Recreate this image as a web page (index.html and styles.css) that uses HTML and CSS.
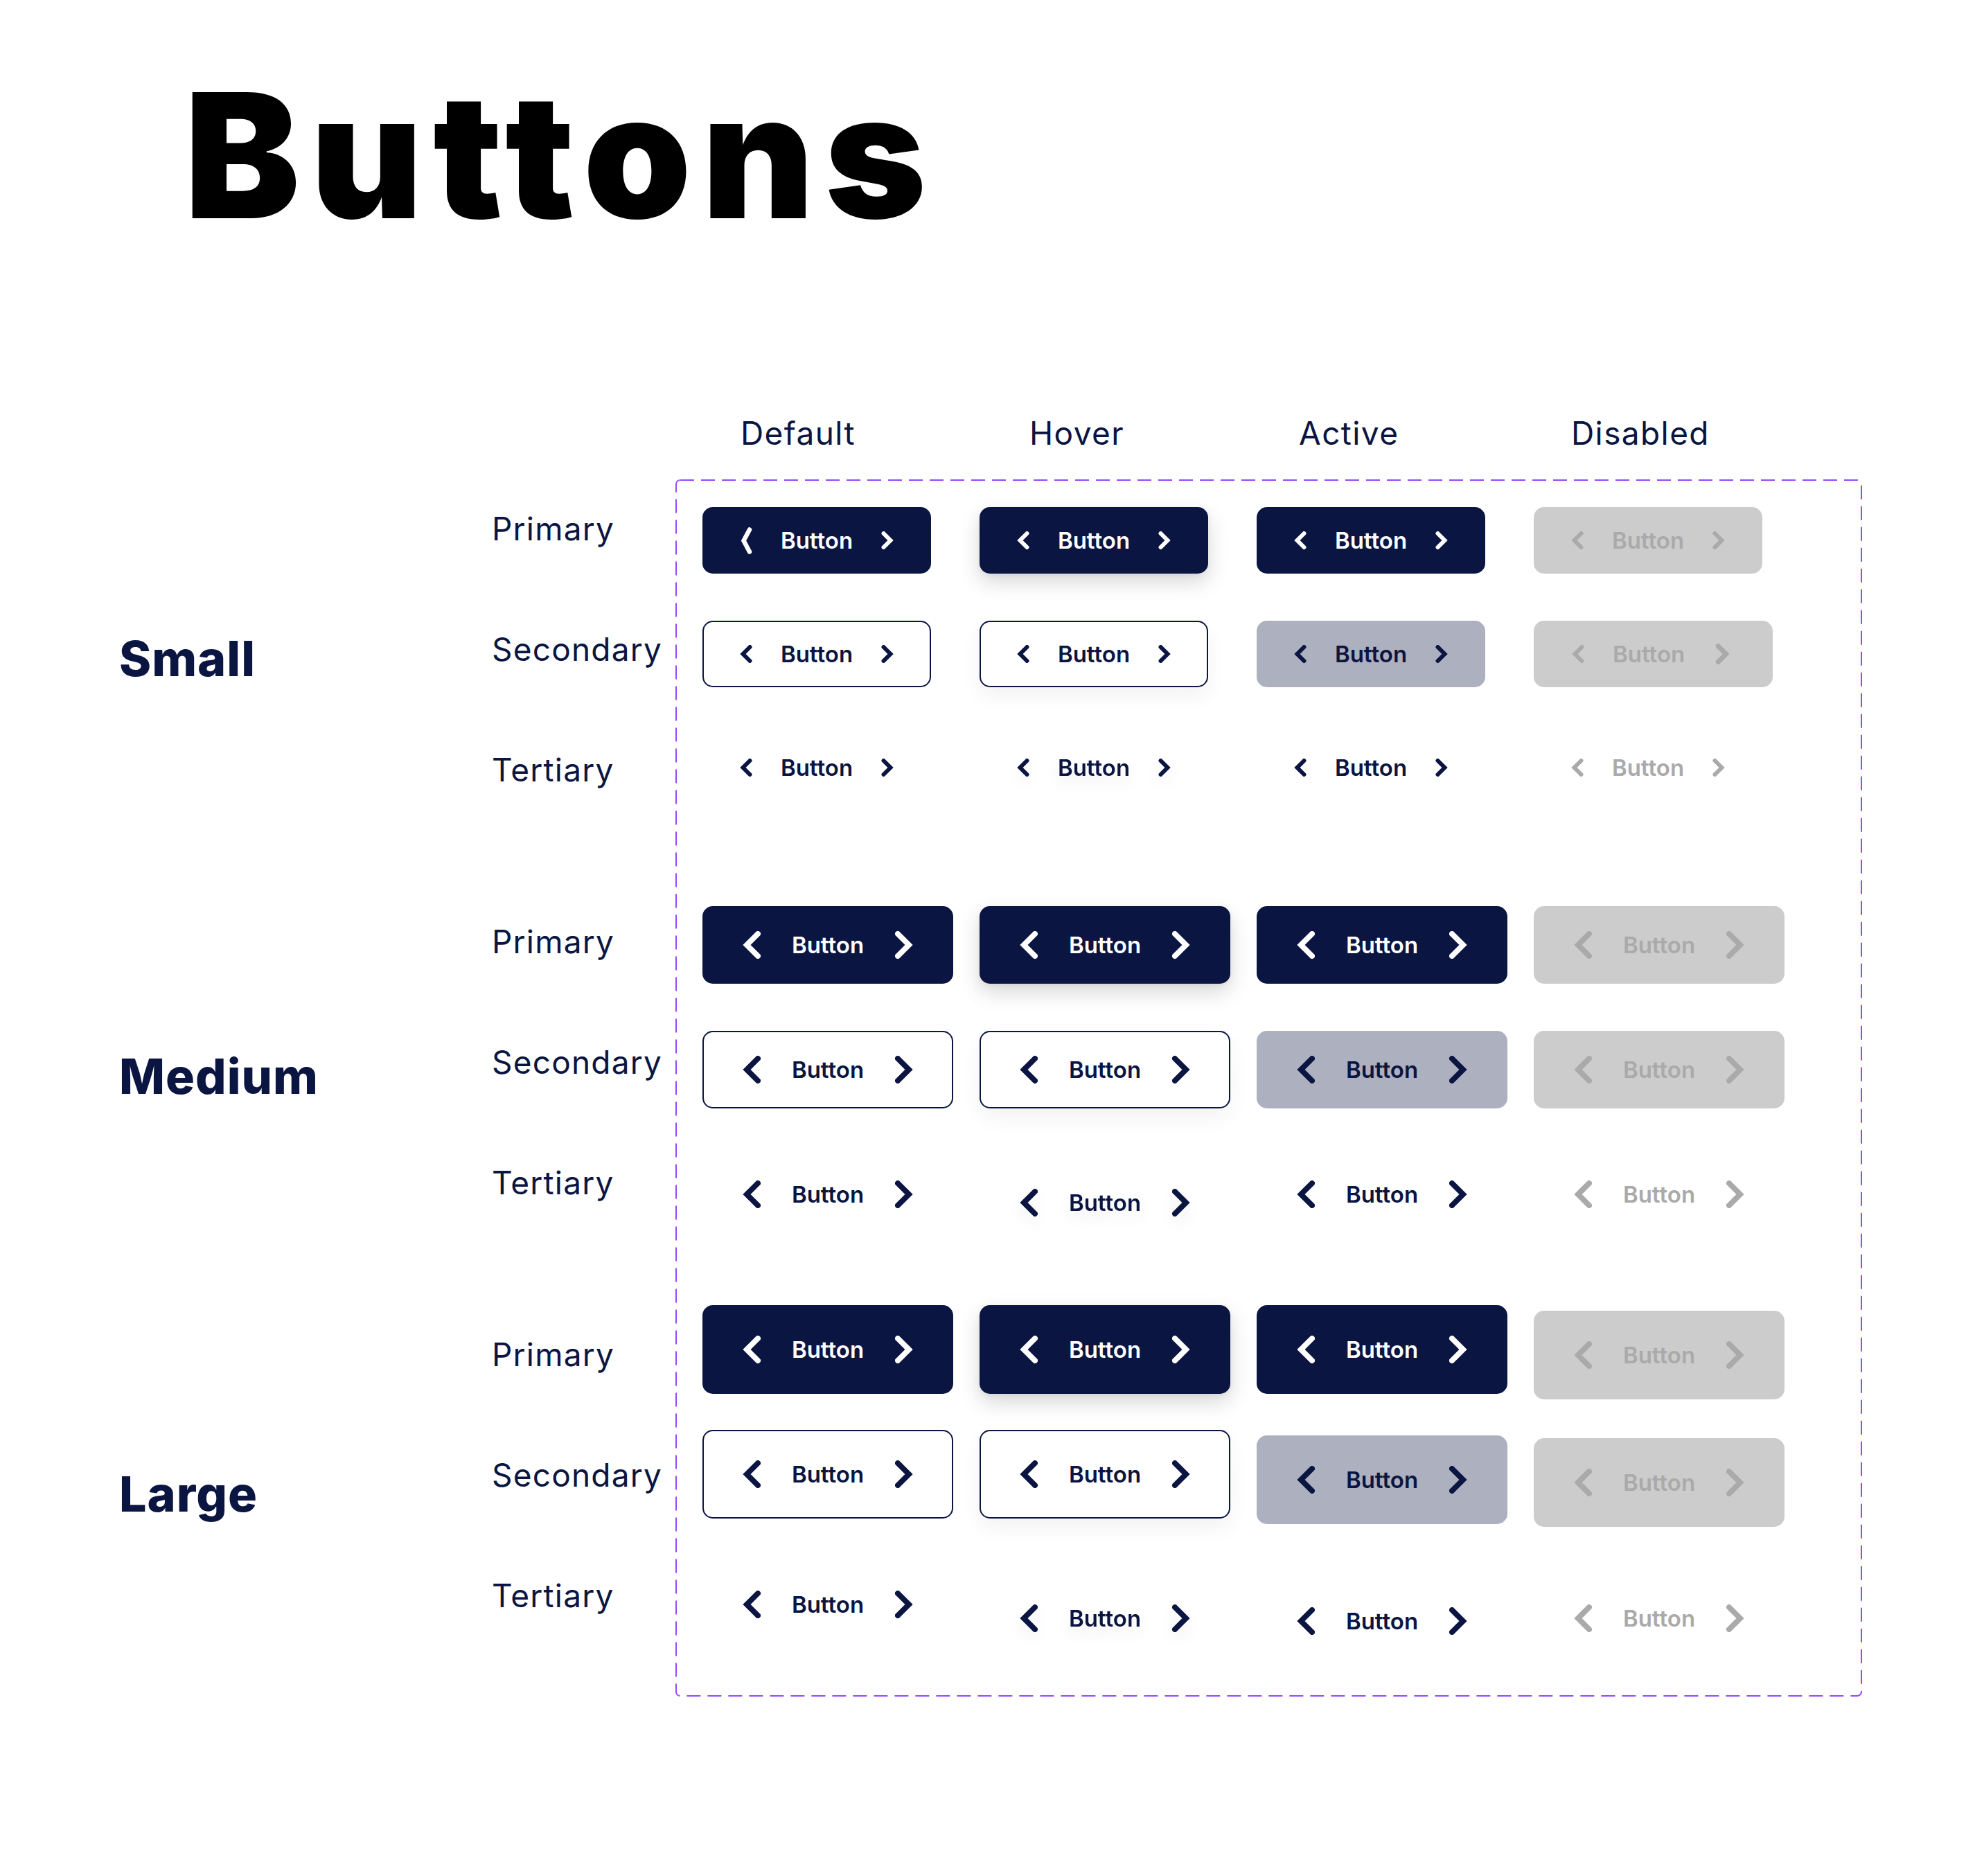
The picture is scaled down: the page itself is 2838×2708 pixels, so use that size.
FILE: index.html
```html
<!DOCTYPE html>
<html lang="en">
<head>
<meta charset="utf-8">
<title>Buttons</title>
<link rel="stylesheet" href="styles.css">
</head>
<body>
<svg class="defs" aria-hidden="true">
  <defs>
    <symbol id="chev-s" viewBox="0 0 18 26"><polyline points="14.5,3 4.5,13 14.5,23" fill="none" stroke="currentColor" stroke-width="6" stroke-linecap="round" stroke-linejoin="miter"/></symbol>
    <symbol id="chev-t" viewBox="0 0 18 39"><polyline points="14,3.5 5.5,19.5 14,35.5" fill="none" stroke="currentColor" stroke-width="6.5" stroke-linecap="round" stroke-linejoin="miter"/></symbol>
    <symbol id="chev-m" viewBox="0 0 26 40"><polyline points="22,4 6,20 22,36" fill="none" stroke="currentColor" stroke-width="8" stroke-linecap="round" stroke-linejoin="miter"/></symbol>
  </defs>
</svg>
<main class="page">
  <h1 class="title">Buttons</h1>

  <div class="col-heads">
    <div class="col-head h-default">Default</div>
    <div class="col-head h-hover">Hover</div>
    <div class="col-head h-active">Active</div>
    <div class="col-head h-disabled">Disabled</div>
  </div>

  <div class="body-row">
    <div class="sizes">
      <div class="size">Small</div>
      <div class="size">Medium</div>
      <div class="size">Large</div>
    </div>

    <div class="types">
      <div class="type-group">
        <div class="type">Primary</div>
        <div class="type">Secondary</div>
        <div class="type">Tertiary</div>
      </div>
      <div class="type-group">
        <div class="type">Primary</div>
        <div class="type">Secondary</div>
        <div class="type">Tertiary</div>
      </div>
      <div class="type-group">
        <div class="type">Primary</div>
        <div class="type">Secondary</div>
        <div class="type">Tertiary</div>
      </div>
    </div>

    <div class="board">
      <svg class="board-frame" width="1713" height="1757" aria-hidden="true"><rect x="1" y="1" width="1711" height="1755" rx="6" ry="6" fill="none" stroke="#9747FF" stroke-width="2" stroke-dasharray="20 10"/></svg>

      <!-- SMALL -->
      <div class="group g-small">
        <div class="row">
          <div class="btn s primary"><svg class="ic tall"><use href="#chev-t"/></svg><span>Button</span><svg class="ic r"><use href="#chev-s"/></svg></div>
          <div class="btn s primary hover"><svg class="ic"><use href="#chev-s"/></svg><span>Button</span><svg class="ic r"><use href="#chev-s"/></svg></div>
          <div class="btn s primary"><svg class="ic"><use href="#chev-s"/></svg><span>Button</span><svg class="ic r"><use href="#chev-s"/></svg></div>
          <div class="btn s disabled"><svg class="ic"><use href="#chev-s"/></svg><span>Button</span><svg class="ic r"><use href="#chev-s"/></svg></div>
        </div>
        <div class="row">
          <div class="btn s secondary"><svg class="ic"><use href="#chev-s"/></svg><span>Button</span><svg class="ic r"><use href="#chev-s"/></svg></div>
          <div class="btn s secondary hover"><svg class="ic"><use href="#chev-s"/></svg><span>Button</span><svg class="ic r"><use href="#chev-s"/></svg></div>
          <div class="btn s secondary active"><svg class="ic"><use href="#chev-s"/></svg><span>Button</span><svg class="ic r"><use href="#chev-s"/></svg></div>
          <div class="btn s disabled wide"><svg class="ic"><use href="#chev-s"/></svg><span>Button</span><svg class="ic r big"><use href="#chev-s"/></svg></div>
        </div>
        <div class="row">
          <div class="btn s tertiary"><svg class="ic"><use href="#chev-s"/></svg><span>Button</span><svg class="ic r"><use href="#chev-s"/></svg></div>
          <div class="btn s tertiary hover"><svg class="ic"><use href="#chev-s"/></svg><span>Button</span><svg class="ic r"><use href="#chev-s"/></svg></div>
          <div class="btn s tertiary"><svg class="ic"><use href="#chev-s"/></svg><span>Button</span><svg class="ic r"><use href="#chev-s"/></svg></div>
          <div class="btn s tertiary disabled"><svg class="ic"><use href="#chev-s"/></svg><span>Button</span><svg class="ic r"><use href="#chev-s"/></svg></div>
        </div>
      </div>

      <!-- MEDIUM -->
      <div class="group g-medium">
        <div class="row">
          <div class="btn m primary"><svg class="ic"><use href="#chev-m"/></svg><span>Button</span><svg class="ic r"><use href="#chev-m"/></svg></div>
          <div class="btn m primary hover"><svg class="ic"><use href="#chev-m"/></svg><span>Button</span><svg class="ic r"><use href="#chev-m"/></svg></div>
          <div class="btn m primary"><svg class="ic"><use href="#chev-m"/></svg><span>Button</span><svg class="ic r"><use href="#chev-m"/></svg></div>
          <div class="btn m disabled"><svg class="ic"><use href="#chev-m"/></svg><span>Button</span><svg class="ic r"><use href="#chev-m"/></svg></div>
        </div>
        <div class="row">
          <div class="btn m secondary"><svg class="ic"><use href="#chev-m"/></svg><span>Button</span><svg class="ic r"><use href="#chev-m"/></svg></div>
          <div class="btn m secondary hover"><svg class="ic"><use href="#chev-m"/></svg><span>Button</span><svg class="ic r"><use href="#chev-m"/></svg></div>
          <div class="btn m secondary active"><svg class="ic"><use href="#chev-m"/></svg><span>Button</span><svg class="ic r"><use href="#chev-m"/></svg></div>
          <div class="btn m disabled"><svg class="ic"><use href="#chev-m"/></svg><span>Button</span><svg class="ic r"><use href="#chev-m"/></svg></div>
        </div>
        <div class="row">
          <div class="btn m tertiary"><svg class="ic"><use href="#chev-m"/></svg><span>Button</span><svg class="ic r"><use href="#chev-m"/></svg></div>
          <div class="btn m tertiary hover dy12"><svg class="ic"><use href="#chev-m"/></svg><span>Button</span><svg class="ic r"><use href="#chev-m"/></svg></div>
          <div class="btn m tertiary"><svg class="ic"><use href="#chev-m"/></svg><span>Button</span><svg class="ic r"><use href="#chev-m"/></svg></div>
          <div class="btn m tertiary disabled"><svg class="ic"><use href="#chev-m"/></svg><span>Button</span><svg class="ic r"><use href="#chev-m"/></svg></div>
        </div>
      </div>

      <!-- LARGE -->
      <div class="group g-large">
        <div class="row">
          <div class="btn l primary"><svg class="ic"><use href="#chev-m"/></svg><span>Button</span><svg class="ic r"><use href="#chev-m"/></svg></div>
          <div class="btn l primary hover"><svg class="ic"><use href="#chev-m"/></svg><span>Button</span><svg class="ic r"><use href="#chev-m"/></svg></div>
          <div class="btn l primary"><svg class="ic"><use href="#chev-m"/></svg><span>Button</span><svg class="ic r"><use href="#chev-m"/></svg></div>
          <div class="btn l disabled dy8"><svg class="ic"><use href="#chev-m"/></svg><span>Button</span><svg class="ic r"><use href="#chev-m"/></svg></div>
        </div>
        <div class="row row-sec">
          <div class="btn l secondary"><svg class="ic"><use href="#chev-m"/></svg><span>Button</span><svg class="ic r"><use href="#chev-m"/></svg></div>
          <div class="btn l secondary hover"><svg class="ic"><use href="#chev-m"/></svg><span>Button</span><svg class="ic r"><use href="#chev-m"/></svg></div>
          <div class="btn l secondary active dy8"><svg class="ic"><use href="#chev-m"/></svg><span>Button</span><svg class="ic r"><use href="#chev-m"/></svg></div>
          <div class="btn l disabled dy12"><svg class="ic"><use href="#chev-m"/></svg><span>Button</span><svg class="ic r"><use href="#chev-m"/></svg></div>
        </div>
        <div class="row row-ter">
          <div class="btn l tertiary"><svg class="ic"><use href="#chev-m"/></svg><span>Button</span><svg class="ic r"><use href="#chev-m"/></svg></div>
          <div class="btn l tertiary hover dy20"><svg class="ic"><use href="#chev-m"/></svg><span>Button</span><svg class="ic r"><use href="#chev-m"/></svg></div>
          <div class="btn l tertiary dy24"><svg class="ic"><use href="#chev-m"/></svg><span>Button</span><svg class="ic r"><use href="#chev-m"/></svg></div>
          <div class="btn l tertiary disabled dy20"><svg class="ic"><use href="#chev-m"/></svg><span>Button</span><svg class="ic r"><use href="#chev-m"/></svg></div>
        </div>
      </div>
    </div>
  </div>
</main>
</body>
</html>
```

FILE: styles.css
```css
* { box-sizing: border-box; }

html, body {
  margin: 0;
  padding: 0;
  background: #ffffff;
}

body {
  width: 2838px;
  height: 2708px;
  overflow: hidden;
  font-family: Inter, "Noto Sans", "Liberation Sans", sans-serif;
  color: #0B1541;
}

.defs {
  display: block;
  width: 0;
  height: 0;
  overflow: hidden;
}

.page {
  padding-top: 100px;
}

.title {
  margin: 0 0 0 266px;
  font-family: Inter, "Liberation Sans", sans-serif;
  font-weight: 900;
  font-size: 250px;
  line-height: 248px;
  letter-spacing: 15px;
  color: #000000;
}

.col-heads {
  margin: 249px 0 0 1014px;
  display: grid;
  grid-template-columns: repeat(4, 400px);
}

.col-head {
  height: 56px;
  line-height: 56px;
  font-size: 46px;
  font-weight: 400;
  letter-spacing: 1.4px;
  white-space: nowrap;
}

.h-default { padding-left: 55px; }
.h-hover { padding-left: 72px; }
.h-active { padding-left: 61px; }
.h-disabled { padding-left: 54px; }

.body-row {
  margin-top: 39px;
  display: flex;
  align-items: flex-start;
}

.sizes {
  width: 538px;
  margin-left: 172px;
  padding-top: 217px;
  display: flex;
  flex-direction: column;
  gap: 519px;
}

.size {
  height: 84px;
  line-height: 84px;
  font-size: 70px;
  font-weight: 800;
  letter-spacing: 1px;
  white-space: nowrap;
}

.types {
  width: 265px;
  padding-top: 43px;
  display: flex;
  flex-direction: column;
  gap: 192px;
}

.type-group {
  display: flex;
  flex-direction: column;
  gap: 118px;
}

.type {
  height: 56px;
  line-height: 56px;
  font-size: 46px;
  font-weight: 400;
  letter-spacing: 1.2px;
  white-space: nowrap;
}

.board {
  position: relative;
  width: 1713px;
  height: 1757px;
  padding: 40px 0 0 39px;
  display: flex;
  flex-direction: column;
}

.board-frame {
  position: absolute;
  left: 0;
  top: 0;
  pointer-events: none;
}

.group {
  display: flex;
  flex-direction: column;
  gap: 68px;
}

.g-medium { margin-top: 152px; }
.g-large { margin-top: 104px; gap: 0; }
.g-large .row-sec { margin-top: 52px; }
.g-large .row-ter { margin-top: 60px; }

.row {
  display: grid;
  grid-template-columns: repeat(4, 400px);
  align-items: start;
}

.g-small .row { height: 96px; }
.g-medium .row { height: 112px; }
.g-large .row { height: 128px; }

/* Buttons */
.btn {
  display: flex;
  align-items: center;
  justify-content: center;
  border-radius: 15px;
  font-family: Inter, "Liberation Sans", sans-serif;
  font-size: 33px;
  font-weight: 600;
  white-space: nowrap;
  color: #0B1541;
}

.btn.s { width: 330px; height: 96px; gap: 41px; }
.btn.m { width: 362px; height: 112px; gap: 45px; }
.btn.l { width: 362px; height: 128px; gap: 45px; }

.ic { display: block; flex: none; overflow: visible; }
.btn.s .ic { width: 18px; height: 26px; }
.btn.s .ic.tall { height: 39px; }
.btn.m .ic, .btn.l .ic { width: 26px; height: 40px; }
.ic.r { transform: scaleX(-1); }

.primary { background: #0B1541; color: #ffffff; }
.primary.hover { box-shadow: 0 12px 30px rgba(0, 0, 0, 0.16), 0 2px 8px rgba(0, 0, 0, 0.05); }

.secondary { background: #ffffff; border: 2px solid #0B1541; }
.secondary.hover { box-shadow: 0 14px 30px rgba(0, 0, 0, 0.05); }
.secondary.active { background: #ADB0BE; border: none; }

.disabled { background: #CCCCCC; color: #AAAAAA; }

.tertiary { background: transparent; }
.tertiary.hover span,
.tertiary.hover .ic { filter: drop-shadow(0 10px 10px rgba(0, 0, 0, 0.07)); }
.tertiary.disabled { background: transparent; color: #AAAAAA; }

.btn.s.wide { width: 345px; justify-content: flex-start; padding-left: 55px; }
.btn.s .ic.big { width: 21px; height: 30px; margin-left: 3px; }

.dy8 { margin-top: 8px; }
.dy12 { margin-top: 12px; }
.dy20 { margin-top: 20px; }
.dy24 { margin-top: 24px; }
```
